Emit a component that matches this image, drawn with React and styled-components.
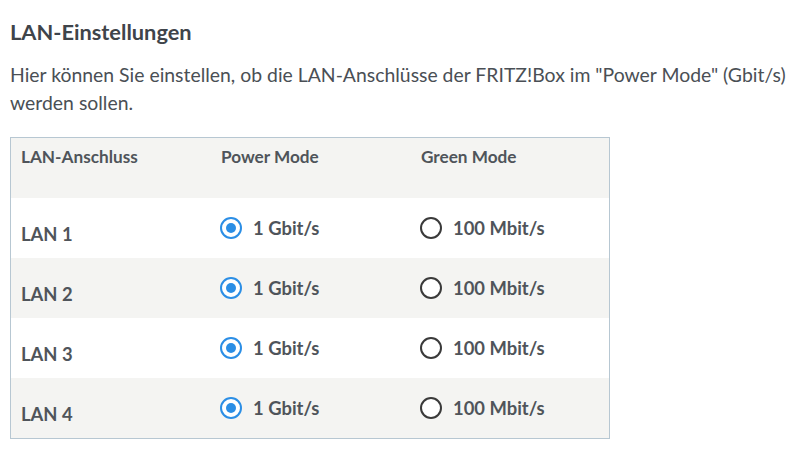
import React, { useState } from 'react';
import styled, { createGlobalStyle } from 'styled-components';

const GlobalStyle = createGlobalStyle`
  html, body {
    margin: 0;
    padding: 0;
    background: #fff;
    font-family: Lato, "Noto Sans", sans-serif;
    color: #4a4f55;
  }
`;

const Page = styled.div`
  padding: 18px 10px 0 10px;
`;

const Title = styled.h2`
  margin: 0;
  font-size: 21.8px;
  font-weight: 700;
  color: #3f444a;
  line-height: 28px;
`;

const Intro = styled.p`
  margin: 15px 0 20px 0;
  font-size: 19.4px;
  line-height: 28px;
  white-space: nowrap;
  color: #4a4f55;
`;

const Table = styled.div`
  width: 598px;
  border: 1px solid #b7c7d2;
`;

const Row = styled.div`
  display: grid;
  grid-template-columns: 200px 200px 198px;
  height: 60px;
  background: ${({ $shaded }) => ($shaded ? '#f4f4f2' : '#fff')};
`;

const HeadCell = styled.div`
  padding: 8px 10px 0 10px;
  font-size: 17.2px;
  font-weight: 700;
  color: #4f545a;
`;

const LabelCell = styled.div`
  display: flex;
  align-items: center;
  padding: 12px 10px 0 10px;
  font-size: 18.4px;
  font-weight: 700;
  color: #4f545a;
`;

const OptionCell = styled.label`
  display: flex;
  align-items: center;
  gap: 11px;
  padding: 0 10px 0 9px;
  font-size: 18.4px;
  font-weight: 700;
  color: #4f545a;
  cursor: pointer;
`;

const Radio = styled.span`
  box-sizing: border-box;
  width: 22px;
  height: 22px;
  border-radius: 50%;
  border: 2px solid ${({ $checked }) => ($checked ? '#2b8ee5' : '#3a3a3a')};
  display: flex;
  align-items: center;
  justify-content: center;
  background: #fff;

  &::after {
    content: '';
    width: 10px;
    height: 10px;
    border-radius: 50%;
    background: ${({ $checked }) => ($checked ? '#2b8ee5' : 'transparent')};
  }
`;

const ports = ['LAN 1', 'LAN 2', 'LAN 3', 'LAN 4'];

export default function App() {
  const [modes, setModes] = useState({ 'LAN 1': 'power', 'LAN 2': 'power', 'LAN 3': 'power', 'LAN 4': 'power' });

  return (
    <Page>
      <GlobalStyle />
      <Title>LAN-Einstellungen</Title>
      <Intro>
        Hier können Sie einstellen, ob die LAN-Anschlüsse der FRITZ!Box im "Power Mode" (Gbit/s)
        <br />
        werden sollen.
      </Intro>
      <Table>
        <Row $shaded>
          <HeadCell>LAN-Anschluss</HeadCell>
          <HeadCell>Power Mode</HeadCell>
          <HeadCell>Green Mode</HeadCell>
        </Row>
        {ports.map((p, i) => (
          <Row key={p} $shaded={i % 2 === 1}>
            <LabelCell>{p}</LabelCell>
            <OptionCell onClick={() => setModes({ ...modes, [p]: 'power' })}>
              <Radio $checked={modes[p] === 'power'} />
              1 Gbit/s
            </OptionCell>
            <OptionCell onClick={() => setModes({ ...modes, [p]: 'green' })}>
              <Radio $checked={modes[p] === 'green'} />
              100 Mbit/s
            </OptionCell>
          </Row>
        ))}
      </Table>
    </Page>
  );
}
